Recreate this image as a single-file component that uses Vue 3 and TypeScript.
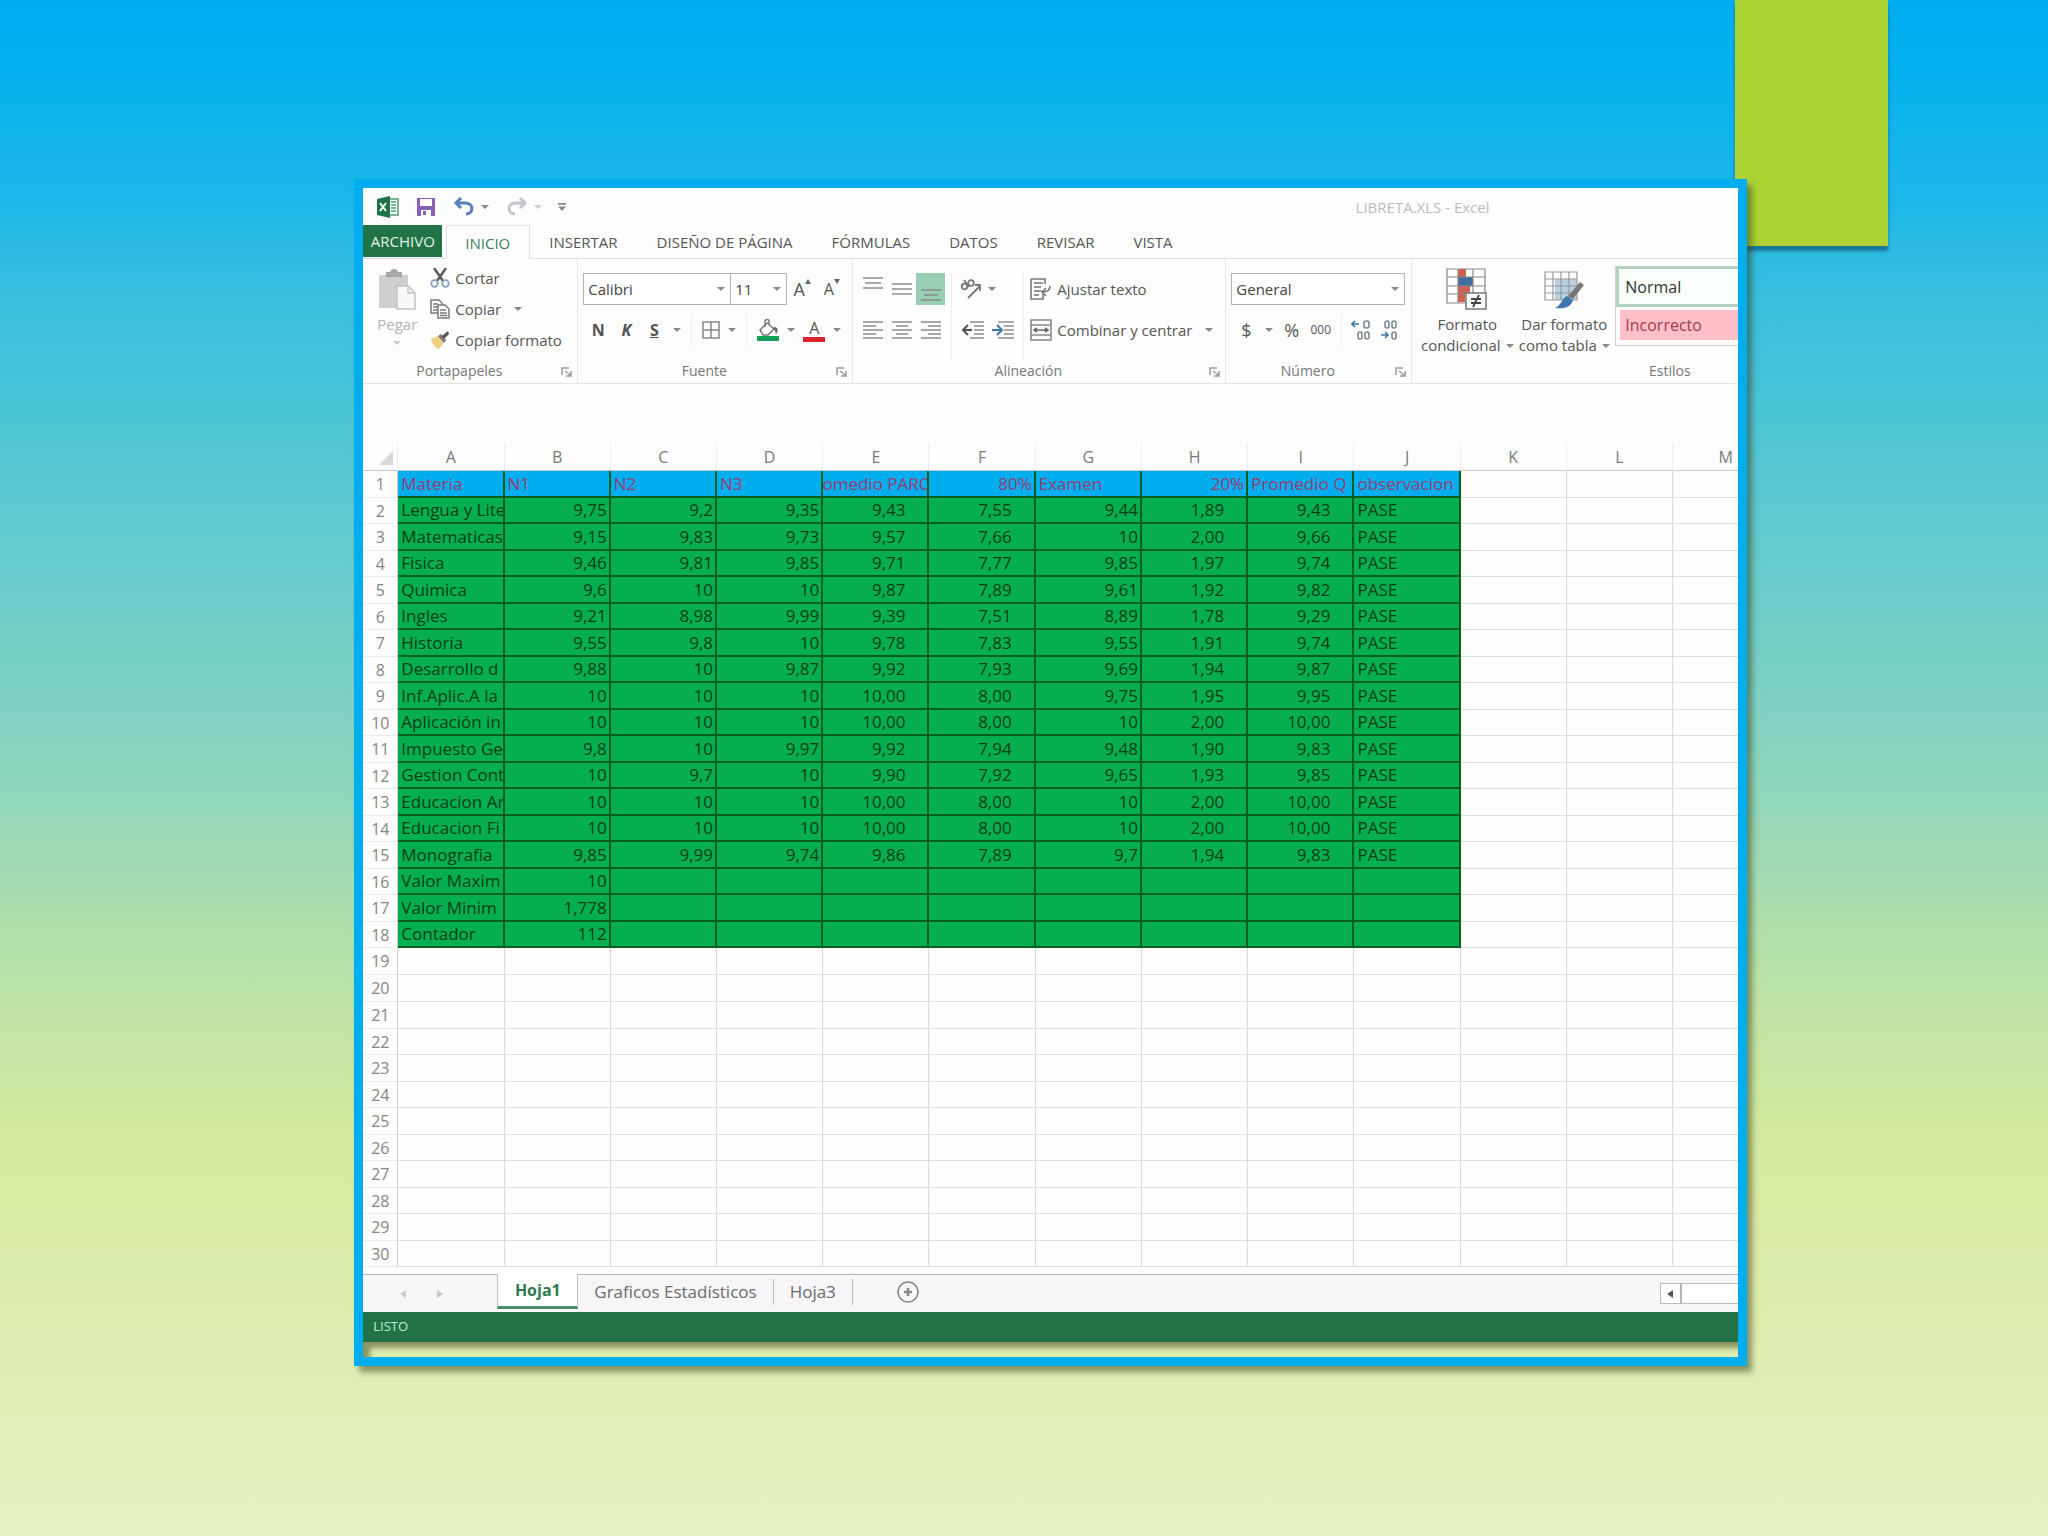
<script setup lang="ts">
import { ref } from 'vue'

const menu = ['INSERTAR', 'DISEÑO DE PÁGINA', 'FÓRMULAS', 'DATOS', 'REVISAR', 'VISTA']
const columns = ['A', 'B', 'C', 'D', 'E', 'F', 'G', 'H', 'I', 'J', 'K', 'L', 'M']

const filled: string[][] = [
  ['Materia', 'N1', 'N2', 'N3', 'omedio PARC', '80%', 'Examen', '20%', 'Promedio Q', 'observacion'],
  ['Lengua y Lite', '9,75', '9,2', '9,35', '9,43', '7,55', '9,44', '1,89', '9,43', 'PASE'],
  ['Matematicas', '9,15', '9,83', '9,73', '9,57', '7,66', '10', '2,00', '9,66', 'PASE'],
  ['Fisica', '9,46', '9,81', '9,85', '9,71', '7,77', '9,85', '1,97', '9,74', 'PASE'],
  ['Quimica', '9,6', '10', '10', '9,87', '7,89', '9,61', '1,92', '9,82', 'PASE'],
  ['Ingles', '9,21', '8,98', '9,99', '9,39', '7,51', '8,89', '1,78', '9,29', 'PASE'],
  ['Historia', '9,55', '9,8', '10', '9,78', '7,83', '9,55', '1,91', '9,74', 'PASE'],
  ['Desarrollo d', '9,88', '10', '9,87', '9,92', '7,93', '9,69', '1,94', '9,87', 'PASE'],
  ['Inf.Aplic.A la', '10', '10', '10', '10,00', '8,00', '9,75', '1,95', '9,95', 'PASE'],
  ['Aplicación in', '10', '10', '10', '10,00', '8,00', '10', '2,00', '10,00', 'PASE'],
  ['Impuesto Ge', '9,8', '10', '9,97', '9,92', '7,94', '9,48', '1,90', '9,83', 'PASE'],
  ['Gestion Cont', '10', '9,7', '10', '9,90', '7,92', '9,65', '1,93', '9,85', 'PASE'],
  ['Educacion Ar', '10', '10', '10', '10,00', '8,00', '10', '2,00', '10,00', 'PASE'],
  ['Educacion Fi', '10', '10', '10', '10,00', '8,00', '10', '2,00', '10,00', 'PASE'],
  ['Monografia', '9,85', '9,99', '9,74', '9,86', '7,89', '9,7', '1,94', '9,83', 'PASE'],
  ['Valor Maxim', '10', '', '', '', '', '', '', '', ''],
  ['Valor Minim', '1,778', '', '', '', '', '', '', '', ''],
  ['Contador', '112', '', '', '', '', '', '', '', ''],
]

const rows = Array.from({ length: 30 }, (_, r) => columns.map((_c, c) => filled[r]?.[c] ?? ''))

const accounting = [4, 5, 7, 8]

function cellClass(r: number, c: number): string[] {
  const out: string[] = []
  if (r < filled.length && c < 10) out.push('used', r === 0 ? 'title' : 'body')
  if (r === 0) {
    if (c === 5 || c === 7) out.push('num')
    if (c === 4) out.push('mid')
  } else if (c > 0 && c < 9) {
    out.push('num')
    if (accounting.includes(c)) out.push('wide')
  }
  return out
}

const font = ref('Calibri')
const size = ref('11')
const format = ref('General')
</script>

<template>
  <main class="slide">
    <div class="accent"></div>
    <section class="frame">
      <div class="excel">
        <header class="quick">
          <svg width="24" height="22" viewBox="0 0 24 22" aria-hidden="true">
            <path d="M12 3h10v16H12z" fill="#fff" stroke="#4f9a73" stroke-width="1.5" />
            <path d="M15 6h5M15 9h5M15 12h5M15 15h5" stroke="#4f9a73" stroke-width="1.5" />
            <path d="M1 3 14 0v22L1 19z" fill="#1e7145" />
            <path d="m4 7 6 8m0-8-6 8" stroke="#fff" stroke-width="2" />
          </svg>
          <button class="save" aria-label="Guardar">
            <svg width="20" height="20" viewBox="0 0 20 20">
              <path d="M1 1h18v18H1z" fill="#8a5fb5" />
              <path d="M4 2h12v7H4zM5 13h10v6H5z" fill="#fff" />
              <path d="M7 14h3v4H7z" fill="#8a5fb5" />
            </svg>
          </button>
          <button class="undo" aria-label="Deshacer">
            <svg width="22" height="20" viewBox="0 0 22 20" fill="none" stroke="#5b7fbe" stroke-width="3">
              <path d="M3 6h9c9 0 9 11 1 11" />
              <path d="M8 1 3 6l5 5" />
            </svg>
            <i class="caret"></i>
          </button>
          <button class="redo" aria-label="Rehacer">
            <svg width="22" height="20" viewBox="0 0 22 20" fill="none" stroke="#c4c6cb" stroke-width="3">
              <path d="M19 6h-9c-9 0-9 11-1 11" />
              <path d="m14 1 5 5-5 5" />
            </svg>
            <i class="caret pale"></i>
          </button>
          <button class="more" aria-label="Personalizar">
            <svg width="8" height="8" viewBox="0 0 9 9"><path d="M0 0h9v2H0zM0 4h9L4.500 9z" fill="#888" /></svg>
          </button>
          <h1>LIBRETA.XLS - Excel</h1>
        </header>

        <nav class="menu">
          <button class="file">ARCHIVO</button>
          <button class="active">INICIO</button>
          <button v-for="m in menu" :key="m">{{ m }}</button>
        </nav>

        <div class="ribbon">
          <section class="group clipboard">
            <div class="tools">
              <button class="paste">
                <svg width="38" height="42" viewBox="0 0 38 42" aria-hidden="true">
                  <path d="M1 6h29v33H1z" fill="#d0cfd0" />
                  <path d="M8 3h4c1-4 7-4 8 0h4v5H8z" fill="#a9a8a8" />
                  <path d="M19 17h11l7 7v16H19z" fill="#f8f8f8" stroke="#c4c4c4" stroke-width="1.500" />
                  <path d="M30 17v7h7" fill="none" stroke="#c4c4c4" stroke-width="1.500" />
                </svg>
                <span>Pegar</span>
                <i class="caret pale"></i>
              </button>
              <div class="list">
                <button>
                  <svg width="20" height="20" viewBox="0 0 20 20" fill="none" aria-hidden="true">
                    <path d="m4 0 9 13M16 0 7 13" stroke="#5a5a5a" stroke-width="2.500" />
                    <circle cx="4.500" cy="15.500" r="3.300" stroke="#8aa3c4" stroke-width="1.800" />
                    <circle cx="15.500" cy="15.500" r="3.300" stroke="#8aa3c4" stroke-width="1.800" />
                  </svg>
                  Cortar
                </button>
                <button>
                  <svg width="20" height="20" viewBox="0 0 20 20" fill="#fff" stroke="#7a7a7a" stroke-width="1.500" aria-hidden="true">
                    <path d="M1 1h8l3 3v10H1zM3 5h5M3 8h5M3 11h5" />
                    <path d="M8 6h7l4 4v9H8zM10 11h6M10 14h7M10 16.500h7" />
                  </svg>
                  Copiar
                  <i class="caret far"></i>
                </button>
                <button>
                  <svg width="20" height="20" viewBox="0 0 20 20" aria-hidden="true">
                    <path d="m1 9 7-3 6 7-5 6C5 18 2 14 1 9z" fill="#edcf86" />
                    <path d="m8 6 3-2 5 6-2 3z" fill="#777" />
                    <path d="m12 6 6-5 1 3-5 5z" fill="#555" />
                  </svg>
                  Copiar formato
                </button>
              </div>
            </div>
            <footer>
              <span>Portapapeles</span>
              <svg class="launch" width="11" height="10" viewBox="0 0 11 10"><path d="M1 8V1h7M4 4l5 4M10 4v5H5" /></svg>
            </footer>
          </section>

          <section class="group fonts">
            <div class="tools stack">
              <div class="row">
                <label class="combo name">
                  <select v-model="font" aria-label="Fuente"><option>Calibri</option></select>
                  <i class="caret"></i>
                </label>
                <label class="combo size">
                  <select v-model="size" aria-label="Tamaño"><option>11</option></select>
                  <i class="caret"></i>
                </label>
                <button class="cell w30 grow">A<svg width="6" height="5" viewBox="0 0 6 5"><path d="M0 5h6L3 0z" fill="#666" /></svg></button>
                <button class="cell w29 shrink">A<svg width="6" height="5" viewBox="0 0 6 5"><path d="M0 0h6L3 5z" fill="#666" /></svg></button>
              </div>
              <div class="row">
                <button class="cell w30"><b>N</b></button>
                <button class="cell w26"><b><em>K</em></b></button>
                <button class="cell w30"><b><u>S</u></b></button>
                <i class="caret slot"></i>
                <i class="sep"></i>
                <button class="cell w26" aria-label="Bordes">
                  <svg width="18" height="18" viewBox="0 0 18 18" fill="none" stroke="#888" stroke-width="1.500"><path d="M1 1h16v16H1zM9 1v16M1 9h16" /></svg>
                </button>
                <i class="caret slot"></i>
                <i class="sep"></i>
                <button class="cell w30" aria-label="Color de relleno">
                  <svg width="22" height="22" viewBox="0 0 22 22">
                    <path d="m3 11 7-7 7 6-6 6H6z" fill="#fff" stroke="#777" stroke-width="1.500" />
                    <path d="M8 8V2c0-2 4-2 4 0v4" fill="none" stroke="#777" stroke-width="1.500" />
                    <path d="M17 8c5 0 4 5 2 7-1-2 0-4-3-5z" fill="#666" />
                    <path d="M0 17h22v5H0z" fill="#12a05a" />
                  </svg>
                </button>
                <i class="caret slot"></i>
                <button class="cell w30 tint" aria-label="Color de fuente"><span>A</span></button>
                <i class="caret slot"></i>
              </div>
            </div>
            <footer>
              <span>Fuente</span>
              <svg class="launch" width="11" height="10" viewBox="0 0 11 10"><path d="M1 8V1h7M4 4l5 4M10 4v5H5" /></svg>
            </footer>
          </section>

          <section class="group align">
            <div class="tools">
              <div class="stack">
                <div class="row">
                  <button class="cell w29 top" aria-label="Alinear arriba"><svg width="20" height="12" viewBox="0 0 20 12"><path class="ln" d="M0 1h20M2 6h16M0 11h20" /></svg></button>
                  <button class="cell w29" aria-label="Alinear en medio"><svg width="20" height="12" viewBox="0 0 20 12"><path class="ln" d="M0 1h20M0 6h20M0 11h20" /></svg></button>
                  <button class="cell w29 on" aria-label="Alinear abajo"><svg width="20" height="12" viewBox="0 0 20 12"><path class="ln" d="M0 1h20M3 6h14M0 11h20" /></svg></button>
                </div>
                <div class="row">
                  <button class="cell w29" aria-label="Izquierda"><svg width="20" height="18" viewBox="0 0 20 18"><path class="ln" d="M0 1h20M0 5h13M0 9h20M0 13h13M0 17h20" /></svg></button>
                  <button class="cell w29" aria-label="Centrar"><svg width="20" height="18" viewBox="0 0 20 18"><path class="ln" d="M0 1h20M4 5h12M0 9h20M4 13h12M0 17h20" /></svg></button>
                  <button class="cell w29" aria-label="Derecha"><svg width="20" height="18" viewBox="0 0 20 18"><path class="ln" d="M0 1h20M7 5h13M0 9h20M7 13h13M0 17h20" /></svg></button>
                </div>
              </div>
              <i class="sep"></i>
              <div class="stack indents">
                <div class="row">
                  <button class="cell w26" aria-label="Orientación">
                    <svg width="22" height="22" viewBox="0 0 22 22" fill="none" stroke="#777" stroke-width="1.800">
                      <circle cx="4.500" cy="8.500" r="2.800" /><path d="M4 2l5 7" /><circle cx="11" cy="5" r="2.800" /><path d="m8 20 12-12M20 13V7h-5" />
                    </svg>
                  </button>
                  <i class="caret slot"></i>
                </div>
                <div class="row">
                  <button class="cell w30" aria-label="Disminuir sangría">
                    <svg width="22" height="18" viewBox="0 0 22 18"><path class="ln" d="M8 1h14M12 5h10M12 9h10M12 13h10M8 17h14" /><path d="M6 4 1 9l5 5M1 9h9" fill="none" stroke="#555" stroke-width="2" /></svg>
                  </button>
                  <button class="cell w29" aria-label="Aumentar sangría">
                    <svg width="22" height="18" viewBox="0 0 22 18"><path class="ln" d="M6 1h16M12 5h10M12 9h10M12 13h10M6 17h16" /><path d="m5 4 5 5-5 5M0 9h9" fill="none" stroke="#4076a8" stroke-width="2" /></svg>
                  </button>
                </div>
              </div>
              <i class="sep"></i>
              <div class="stack">
                <div class="row">
                  <button class="text">
                    <svg width="22" height="22" viewBox="0 0 22 22" fill="none" stroke="#777" stroke-width="1.600" aria-hidden="true">
                      <path d="M1 1h14v5M1 1v20h12v-5M4 5h9M4 9h7M4 13h7M4 17h5" /><path d="M20 8c0 5-3 6-7 6M16 10l-4 4 4 4" />
                    </svg>
                    Ajustar texto
                  </button>
                </div>
                <div class="row">
                  <button class="text">
                    <svg width="22" height="22" viewBox="0 0 22 22" fill="none" stroke="#888" stroke-width="1.600" aria-hidden="true">
                      <path d="M1 1h20v20H1zM1 6h20M1 16h20" /><path d="M4 11h14M7 9l-3 2 3 2M15 9l3 2-3 2" stroke="#666" />
                    </svg>
                    Combinar y centrar
                    <i class="caret far"></i>
                  </button>
                </div>
              </div>
            </div>
            <footer>
              <span>Alineación</span>
              <svg class="launch" width="11" height="10" viewBox="0 0 11 10"><path d="M1 8V1h7M4 4l5 4M10 4v5H5" /></svg>
            </footer>
          </section>

          <section class="group number">
            <div class="tools stack">
              <div class="row">
                <label class="combo full">
                  <select v-model="format" aria-label="Formato de número"><option>General</option></select>
                  <i class="caret"></i>
                </label>
              </div>
              <div class="row">
                <button class="cell w30 sign">$</button>
                <i class="caret slot"></i>
                <button class="cell w29 sign">%</button>
                <button class="cell w29 zeros">000</button>
                <i class="sep"></i>
                <button class="cell w26" aria-label="Aumentar decimales">
                  <svg width="20" height="20" viewBox="0 0 20 20" fill="none" stroke="#7d8791" stroke-width="1.600">
                    <path d="M8 4H1M4 1 1 4l3 3" stroke="#4076a8" /><rect x="13" y="1" width="5" height="7" rx="2" /><rect x="7" y="12" width="4" height="7" rx="2" /><rect x="14" y="12" width="4" height="7" rx="2" />
                  </svg>
                </button>
                <button class="cell w30" aria-label="Disminuir decimales">
                  <svg width="20" height="20" viewBox="0 0 20 20" fill="none" stroke="#7d8791" stroke-width="1.600">
                    <path d="M2 15h7M6 12l3 3-3 3" stroke="#4076a8" /><rect x="6" y="1" width="4" height="7" rx="2" /><rect x="13" y="1" width="4" height="7" rx="2" /><rect x="13" y="12" width="4" height="7" rx="2" />
                  </svg>
                </button>
              </div>
            </div>
            <footer>
              <span>Número</span>
              <svg class="launch" width="11" height="10" viewBox="0 0 11 10"><path d="M1 8V1h7M4 4l5 4M10 4v5H5" /></svg>
            </footer>
          </section>

          <section class="group styles">
            <div class="tools">
              <button class="big cond">
                <svg width="42" height="42" viewBox="0 0 42 42" aria-hidden="true">
                  <path d="M1 1h38v34H1z" fill="#fff" />
                  <path d="M12 1h8v8h-8zM12 18h12v8H12zM12 26h7v8h-7z" fill="#d2604f" />
                  <path d="M12 9h15v9H12z" fill="#3f6f9f" />
                  <path d="M1 1h38v34H1zM1 9h38M1 18h38M1 26h38M12 1v34M27 1v34" fill="none" stroke="#8e8585" stroke-width="1.200" />
                  <path d="M20 25h20v16H20z" fill="#fff" stroke="#777" stroke-width="1.500" />
                  <path d="M25 31h10M25 35h10M33 27l-6 12" stroke="#444" stroke-width="1.800" />
                </svg>
                <span>Formato</span>
                <span>condicional<i class="caret"></i></span>
              </button>
              <button class="big tbl">
                <svg width="42" height="42" viewBox="0 0 42 42" aria-hidden="true">
                  <path d="M2 4h32v28H2z" fill="#fff" />
                  <path d="M12 11h22v21H12z" fill="#b9cfe2" />
                  <path d="M2 4h32v28H2zM2 11h32M2 18h32M2 25h32M10 4v28M18 4v28M26 4v28" fill="none" stroke="#999" stroke-width="1.200" />
                  <path d="m37 14 4 3-11 14-5-3z" fill="#777" />
                  <path d="m24 28 6 4c-2 7-8 9-18 8 6-2 7-10 12-12z" fill="#3f78ad" />
                </svg>
                <span>Dar formato</span>
                <span>como tabla<i class="caret"></i></span>
              </button>
              <div class="gallery">
                <button class="normal">Normal</button>
                <button class="bad">Incorrecto</button>
              </div>
            </div>
            <footer><span>Estilos</span></footer>
          </section>
        </div>

        <div class="grid">
          <table>
            <colgroup>
              <col class="index" />
              <col v-for="c in columns" :key="c" />
            </colgroup>
            <thead>
              <tr>
                <th class="corner"><svg width="14" height="14" viewBox="0 0 14 14" aria-hidden="true"><path d="M14 0v14H0z" fill="#d9d9d9" /></svg></th>
                <th v-for="c in columns" :key="c" scope="col">{{ c }}</th>
              </tr>
            </thead>
            <tbody>
              <tr v-for="(row, r) in rows" :key="r">
                <th scope="row">{{ r + 1 }}</th>
                <td v-for="(value, c) in row" :key="c" :class="cellClass(r, c)">{{ value }}</td>
              </tr>
            </tbody>
          </table>
        </div>

        <div class="sheets">
          <div class="arrows">
            <svg width="6" height="8" viewBox="0 0 6 8"><path d="M6 0v8L0 4z" fill="#c8c8cc" /></svg>
            <svg width="6" height="8" viewBox="0 0 6 8"><path d="M0 0v8l6-4z" fill="#c8c8cc" /></svg>
          </div>
          <button class="current">Hoja1</button>
          <button>Graficos Estadísticos</button>
          <button>Hoja3</button>
          <button class="add" aria-label="Hoja nueva">
            <svg width="24" height="24" viewBox="0 0 24 24" fill="none" stroke="#888"><circle cx="12" cy="12" r="10" stroke-width="1.500" /><path d="M12 8v8M8 12h8" stroke-width="2.500" /></svg>
          </button>
          <div class="scroll">
            <span><svg width="6" height="8" viewBox="0 0 6 8"><path d="M6 0v8L0 4z" fill="#555" /></svg></span>
          </div>
        </div>
        <div class="status">LISTO</div>
      </div>
      <div class="ledge"></div>
    </section>
  </main>
</template>

<style>
body {
  margin: 0;
}
</style>

<style scoped>
.slide {
  position: relative;
  box-sizing: border-box;
  min-height: 100vh;
  padding: 179px 0 60px 17.3%;
  overflow: hidden;
  font: 15px/20px 'Open Sans', 'Noto Sans', sans-serif;
  color: #555;
  background: linear-gradient(#00aeef 0%, #02b0f0 3%, #1cb7e8 13%, #38bfe0 19%, #8ad5be 50%, #b6e0aa 62%, #d5ea9e 74%, #dcedae 86%, #e6f2c3 100%);
}
.accent {
  position: absolute;
  top: 0;
  left: 84.7%;
  width: 7.5%;
  height: 246px;
  background: #aed334;
  box-shadow: 0 5px 3px rgba(10, 60, 90, 0.55);
}
.frame {
  position: relative;
  box-sizing: border-box;
  width: 82.2%;
  border: 9px solid #00aeef;
  box-shadow: 5px 6px 6px rgba(50, 60, 20, 0.5);
}
.excel {
  overflow: hidden;
  background: #fefdfe;
}
button {
  display: flex;
  align-items: center;
  margin: 0;
  padding: 0;
  border: 0;
  background: none;
  font: inherit;
  color: inherit;
  white-space: nowrap;
}
svg {
  flex: none;
}
.caret {
  flex: none;
  width: 0;
  height: 0;
  border: solid transparent;
  border-width: 4px 4px 0;
  border-top-color: #888;
}
.caret.pale {
  border-top-color: #ccc;
}
.caret.slot {
  margin: 0 4px;
}
.caret.far {
  margin-left: 8px;
}
.sep {
  flex: none;
  align-self: stretch;
  width: 1px;
  margin: 0 6px;
  background: #ececf0;
}

.quick {
  display: flex;
  align-items: center;
  height: 37px;
  padding-left: 13px;
}
.save,
.more {
  margin-left: 16px;
}
.undo,
.redo {
  gap: 6px;
  margin-left: 17px;
}
.quick h1 {
  margin: 0 248px 0 auto;
  font: 15px/20px 'Open Sans', 'Noto Sans', sans-serif;
  color: #bdbabd;
}

.menu {
  display: flex;
  height: 33px;
  border-bottom: 1px solid #dcdadd;
}
.menu button {
  padding: 0 20px 0 19px;
}
.menu .file {
  justify-content: center;
  width: 79px;
  padding: 0;
  margin: 0 4px 1px 0;
  background: #217346;
  color: #e4f4ea;
}
.menu .active {
  margin: 0 0 -1px;
  padding: 0 19px 0 18px;
  border: 1px solid #e2e2e4;
  border-bottom: 0;
  background: #fefdfe;
  color: #3a8159;
}

.ribbon {
  display: flex;
  height: 124px;
  border-bottom: 1px solid #e6e4e8;
}
.group {
  flex: none;
  display: flex;
  flex-direction: column;
  box-sizing: border-box;
  border-right: 1px solid #e8e6ea;
}
.group footer {
  position: relative;
  display: flex;
  justify-content: center;
  height: 22px;
  padding-right: 22px;
  font-size: 14px;
  line-height: 20px;
  color: #777;
}
.launch {
  position: absolute;
  right: 5px;
  top: 6px;
  fill: none;
  stroke: #999;
  stroke-width: 1.5;
}
.tools {
  display: flex;
  flex: 1;
  padding: 14px 5px 0;
}
.stack {
  display: flex;
  flex-direction: column;
  gap: 9px;
}
.row {
  display: flex;
  align-items: center;
  height: 32px;
}
.cell {
  flex: none;
  justify-content: center;
  height: 32px;
}
.w26 {
  width: 26px;
}
.w29 {
  width: 29px;
}
.w30 {
  width: 30px;
}
.ln {
  stroke: #8c8c8c;
  stroke-width: 1.5;
}

.clipboard {
  width: 215px;
}
.clipboard .tools {
  padding: 10px 0 0 14px;
}
.paste {
  flex-direction: column;
  width: 40px;
  height: 80px;
  color: #b5b3b5;
}
.paste span {
  line-height: 26px;
}
.paste .caret {
  margin-top: 4px;
}
.list {
  display: flex;
  flex-direction: column;
  padding-left: 13px;
  margin-top: -7px;
}
.list button {
  gap: 5px;
  height: 31px;
}

.fonts {
  width: 275px;
}
.combo {
  position: relative;
  display: flex;
  box-sizing: border-box;
  height: 32px;
}
.combo select {
  width: 100%;
  padding: 0 4px;
  border: 1px solid #b4b2b6;
  border-radius: 0;
  appearance: none;
  background: #fff;
  font: inherit;
  color: #444;
}
.combo .caret {
  position: absolute;
  right: 6px;
  top: 14px;
}
.name {
  width: 148px;
}
.size {
  width: 57px;
  margin-left: -1px;
}
.full {
  width: 100%;
}
.grow,
.shrink {
  align-items: flex-start;
  font-size: 18px;
  line-height: 32px;
}
.shrink {
  font-size: 16px;
}
.grow svg,
.shrink svg {
  margin-top: 6px;
}
.cell b {
  font-size: 16px;
}
.tint span {
  width: 22px;
  height: 18px;
  border-bottom: 5px solid #d9202c;
  font-size: 16px;
  line-height: 18px;
}

.align {
  width: 373px;
}
.on {
  background: #98cfb2;
  align-items: flex-end;
  padding-bottom: 4px;
}
.top {
  align-items: flex-start;
  padding-top: 4px;
}
.indents {
  width: 59px;
}
.text {
  gap: 5px;
}

.number {
  width: 186px;
}
.number .tools {
  padding-right: 6px;
}
.sign {
  font-size: 18px;
}
.zeros {
  font-size: 12px;
}

.group.styles {
  flex: 1;
  min-width: 0;
  border: 0;
}
.styles .tools {
  padding-top: 9px;
}
.styles footer {
  padding-right: 0;
  margin-left: 190px;
}
.big {
  flex: none;
  flex-direction: column;
  height: 86px;
  line-height: 21px;
}
.big svg {
  margin-bottom: 4px;
}
.big span {
  display: flex;
  align-items: center;
  gap: 5px;
}
.cond {
  width: 100px;
}
.tbl {
  width: 94px;
}
.gallery {
  flex: 1;
  height: 80px;
  margin: -2px -5px 0 4px;
  box-sizing: border-box;
  border: solid #cdd0ce;
  border-width: 0 0 1px 1px;
}
.gallery button {
  width: 100%;
  font-size: 16px;
}
.gallery .normal {
  height: 41px;
  padding-left: 6px;
  border: 3px solid #b3d2c1;
  border-right: 0;
  background: #fbfffc;
  color: #333;
}
.gallery .bad {
  height: 30px;
  margin: 3px 0 0 4px;
  padding-left: 5px;
  background: #ffbfc8;
  color: #a83848;
}

.grid {
  height: 831px;
  margin-top: 59px;
  overflow: hidden;
}
table {
  width: calc(100% + 42px);
  border-spacing: 0;
  table-layout: fixed;
  font-size: 17px;
  line-height: 20px;
}
.index {
  width: 35px;
}
th,
td {
  box-sizing: border-box;
  padding: 0;
  overflow: hidden;
  white-space: nowrap;
  font-weight: 400;
}
thead tr {
  height: 28px;
}
thead th {
  border-right: 1px solid #eeecef;
  border-bottom: 1px solid #c9c7cb;
  font-size: 16px;
  color: #7a7a7a;
}
.corner {
  text-align: right;
  vertical-align: bottom;
}
.corner svg {
  display: block;
  margin: 0 4px 5px auto;
}
tbody tr {
  height: 26px;
}
tbody tr:nth-child(odd),
tbody tr:nth-child(20n) {
  height: 27px;
}
tbody th {
  border-right: 1px solid #cfcdd1;
  border-bottom: 1px solid #ececee;
  font-size: 16px;
  color: #858585;
}
td {
  border-right: 1px solid #d9d7db;
  border-bottom: 1px solid #dedce0;
}
td.used {
  padding: 0 2px 0 3px;
  border-right: 2px solid #04601f;
  border-bottom: 2px solid #04601f;
}
.title {
  background: #00aeef;
  color: #9c3d72;
}
.body {
  background: #05ae50;
  color: #033f16;
}
td.num {
  text-align: right;
}
td.mid {
  padding: 0;
  direction: rtl;
}
td.used.wide {
  padding-right: 22px;
}

.sheets {
  display: flex;
  align-items: stretch;
  height: 38px;
  box-sizing: border-box;
  border-top: 1px solid #b9b6b9;
  background: #f7f5f7;
}
.arrows {
  display: flex;
  align-items: center;
  gap: 31px;
  box-sizing: border-box;
  width: 134px;
  padding-left: 37px;
}
.sheets button {
  height: 26px;
  margin-top: 4px;
  padding: 0 16px;
  border-right: 1px solid #bbb9bb;
  font-size: 17px;
  color: #6b6b6b;
}
.sheets .current {
  justify-content: center;
  width: 81px;
  height: 35px;
  margin-top: -1px;
  padding: 0;
  border: 1px solid #c4c2c4;
  border-width: 0 1px 3px;
  border-bottom-color: #4a8c68;
  background: #fff;
  font-size: 16px;
  font-weight: 700;
  color: #2f7a50;
}
.sheets .add {
  padding: 0;
  margin-left: 43px;
  border: 0;
}
.scroll {
  box-sizing: border-box;
  width: 78px;
  height: 21px;
  margin: 8px 0 0 auto;
  border: 1px solid #bbb9bb;
  border-right: 0;
  background: #fff;
}
.scroll span {
  display: flex;
  align-items: center;
  justify-content: center;
  width: 19px;
  height: 19px;
  border-right: 2px solid #b5b3b5;
}
.status {
  height: 30px;
  padding-left: 10px;
  background: #217346;
  font-size: 13px;
  line-height: 29px;
  color: #c8ecd6;
}
.ledge {
  height: 15px;
  box-shadow: inset 7px 6px 5px rgba(60, 60, 20, 0.5);
}
</style>
